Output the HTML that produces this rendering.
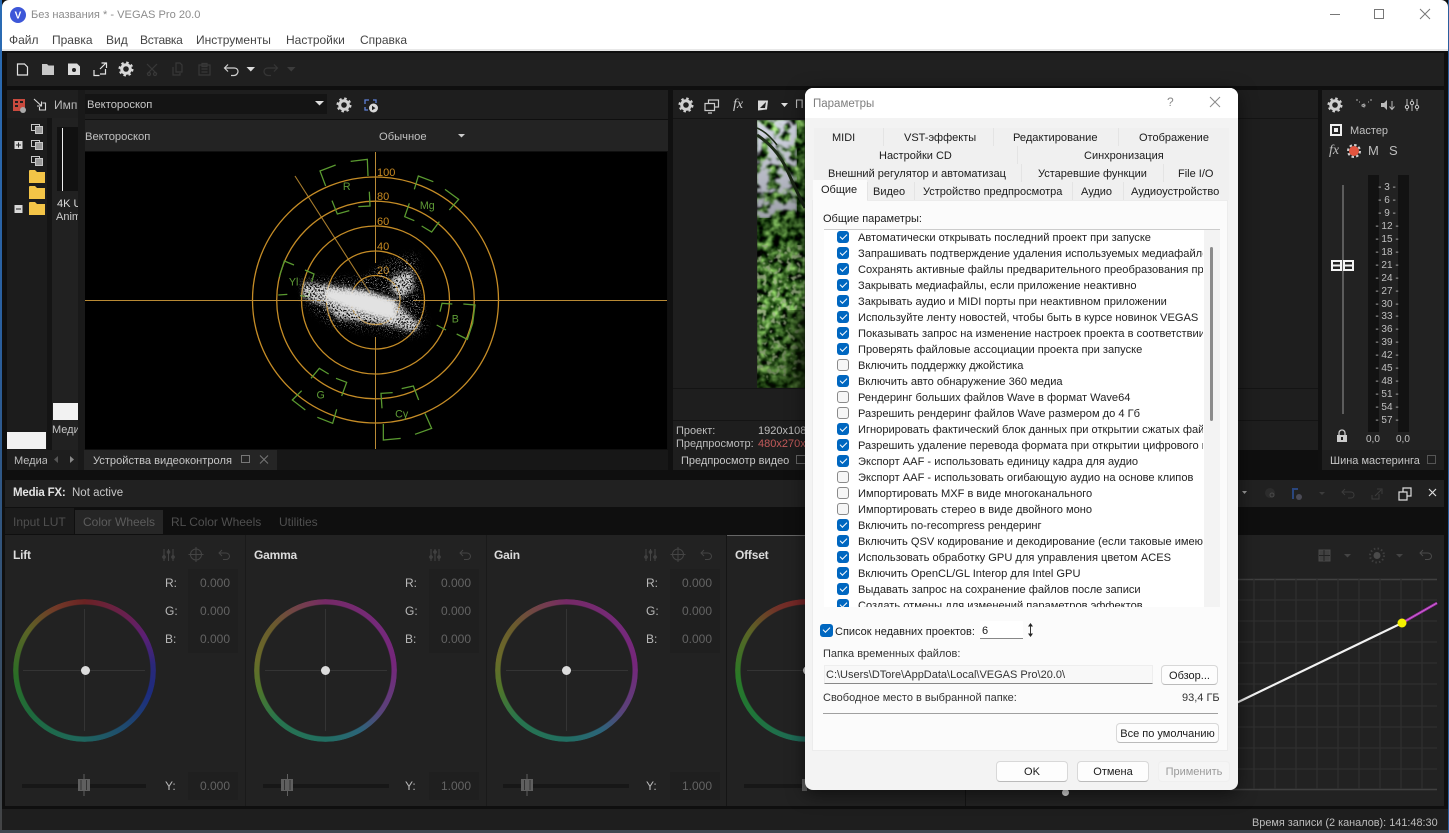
<!DOCTYPE html>
<html lang="ru"><head><meta charset="utf-8"><title>Без названия * - VEGAS Pro 20.0</title>
<style>
html,body{margin:0;padding:0;background:#2a6cb5}
#r{position:relative;width:1449px;height:833px;overflow:hidden;background:#2a6cb5;font-family:"Liberation Sans",sans-serif;font-size:11px}
#r div,#r span.a{position:absolute}
.t{position:absolute;white-space:nowrap;line-height:14px;height:14px;margin-top:1px}
.t[style*="font-size:12px"],.h,.lb{margin-top:0}
svg{position:absolute;overflow:visible}
.d{color:#1b1b1b}
.it{left:858px;width:345px;overflow:hidden;color:#222;font-size:11.1px}
.c{position:absolute;left:837px;width:12px;height:12px;border-radius:3px;background:#0067c0}
.c:after{content:"";position:absolute;left:2.5px;top:2.5px;width:6px;height:3px;border-left:1.2px solid #fff;border-bottom:1.2px solid #fff;transform:rotate(-45deg)}
.u{position:absolute;left:837px;width:10px;height:10px;border-radius:3px;background:#f6f6f6;border:1px solid #8a8a8a}
.btn{background:#fdfdfd;border:1px solid #d8d8d8;border-bottom-color:#bbb;border-radius:4px;color:#1b1b1b;text-align:center;box-sizing:border-box;font-size:11px;line-height:20px}
.w{border-radius:50%;width:143px;height:143px;opacity:.8;-webkit-mask:radial-gradient(closest-side,transparent 65.5px,#000 66.5px,#000 71px,transparent 72px);mask:radial-gradient(closest-side,transparent 65.5px,#000 66.5px,#000 71px,transparent 72px)}
.v{background:#1f1f1f;color:#636363;text-align:right;font-size:12px;line-height:28px;width:50px;height:28px;box-sizing:border-box;padding-right:8px}
.lb{color:#b8b8b8;font-size:12px}
.h{color:#dcdcdc;font-weight:bold;font-size:12px;letter-spacing:-.2px}
.s{color:#c0c0c0;font-size:10px;width:40px;text-align:center;left:1367px}
</style></head><body><div id="r">

<!-- edges -->
<div style="left:0;top:0;width:2px;height:833px;background:linear-gradient(#2a6cb5,#2a5f9e 40%,#35506e 75%,#444 100%)"></div>
<div style="left:0;top:830px;width:1449px;height:3px;background:#3d4650"></div>
<div style="left:1448px;top:0;width:1px;height:833px;background:#2a5f9e"></div>

<!-- app base -->
<div style="left:2px;top:0;width:1446px;height:830px;background:#0f0f0f"></div>
<div style="left:2px;top:0;width:1446px;height:50px;background:#fff;border-radius:7px 7px 0 0"></div>
<div style="left:2px;top:49px;width:1446px;height:2px;background:#e8e8e8"></div>
<svg style="left:10px;top:7px" width="16" height="16"><circle cx="8" cy="8" r="8" fill="#3d57d8"/><text x="8" y="11.5" font-size="10" font-weight="bold" fill="#fff" text-anchor="middle" font-family="Liberation Sans">V</text></svg>
<span class="t" style="left:31px;top:8px;font-size:11.1px;color:#8c8c8c;margin-top:0">Без названия * - VEGAS Pro 20.0</span>
<span class="t" style="left:9px;top:33px;font-size:12px;color:#444">Файл</span>
<span class="t" style="left:52px;top:33px;font-size:12px;color:#444">Правка</span>
<span class="t" style="left:106px;top:33px;font-size:12px;color:#444">Вид</span>
<span class="t" style="left:140px;top:33px;font-size:12px;color:#444;letter-spacing:-.3px">Вставка</span>
<span class="t" style="left:196px;top:33px;font-size:12px;color:#444">Инструменты</span>
<span class="t" style="left:286px;top:33px;font-size:12px;color:#444">Настройки</span>
<span class="t" style="left:360px;top:33px;font-size:12px;color:#444">Справка</span>
<svg style="left:1330px;top:5px" width="110" height="20" fill="none" stroke="#777" stroke-width="1"><path d="M0 9.500h10"/><rect x="44.500" y="4.500" width="9" height="9"/><path d="M90 4l10 10M100 4l-10 10"/></svg>

<!-- main toolbar -->
<div style="left:7px;top:53px;width:1437px;height:33px;background:#202020"></div>
<svg style="left:0;top:0" width="400" height="90" fill="none" stroke="#e4e4e4" stroke-width="1.200">
<path d="M17.500 64h7l3 3v8h-10z"/>
<path d="M42 64h5l1.500 1.500h5.500v9.500h-12z" fill="#c8c8c8" stroke="none"/>
<path d="M68 63.500h9l3 3v8.500h-12z" fill="#dcdcdc" stroke="none"/><circle cx="74" cy="70" r="2" fill="#202020" stroke="none"/>
<path d="M94 70v5.500h5.500M100 74h5.500v-5M100 69l6-6M101.500 63h5v5"/>
<circle cx="126" cy="69" r="4.300" stroke="#d8d8d8" stroke-width="3"/><circle cx="126" cy="69" r="6.500" stroke="#d8d8d8" stroke-width="2" stroke-dasharray="2.500 2.600"/>
<path d="M147 64l10 10M157 64l-10 10" stroke="#383838"/><circle cx="149" cy="74" r="1.500" stroke="#383838"/><circle cx="155" cy="74" r="1.500" stroke="#383838"/>
<path d="M173 67v8h7v-2M176 63h4l2 2v7h-6z" stroke="#383838"/>
<path d="M199 65h11v10h-11zM202 63.500h5v3h-5zM201.500 69h6M201.500 72h6" stroke="#383838"/>
<path d="M225 68h9c3 0 4 2 4 3.500s-1.500 4-4 4h-3M228 64.500l-3.500 3.500 3.500 3.500" stroke="#d0d0d0"/>
<path d="M246.500 67h8.500l-4.200 4.500z" fill="#ddd" stroke="none"/>
<path d="M277 68h-9c-3 0-4 2-4 3.500s1.500 4 4 4h3M274 64.500l3.500 3.500-3.500 3.500" stroke="#363636"/>
<path d="M287 67h8.500l-4.200 4.500z" fill="#3c3c3c" stroke="none"/>
</svg>

<!-- LEFT media panel -->
<div style="left:7px;top:90px;width:71px;height:360px;background:#1f1f1f"></div>
<div style="left:7px;top:118px;width:40px;height:332px;background:#1c1c1c"></div>
<div style="left:47px;top:118px;width:5px;height:332px;background:#141414"></div>
<div style="left:52px;top:118px;width:27px;height:332px;background:#212121"></div>
<div style="left:78px;top:90px;width:7px;height:380px;background:#191919"></div>
<svg style="left:0;top:90px" width="85" height="140" fill="none">
<path d="M13 9h12v12h-12z" fill="#c84a3e"/><path d="M15 11h3v2h-3zM20 11h3v2h-3zM15 15h3v2h-3z" fill="#1f1f1f"/><circle cx="23" cy="20" r="3" fill="#aaa"/>
<path d="M34 9l7.500 7M41.500 11.500v4.500h-4.500M39.500 17v3h6v-7h-3" stroke="#d8d8d8" stroke-width="1.100"/>
</svg>
<span class="t" style="left:54px;top:98px;font-size:12px;color:#bbb;width:24px;overflow:hidden">Имп</span>
<svg style="left:0;top:120px" width="50" height="100">
<g fill="none" stroke="#c8c8c8" stroke-width="1"><rect x="31.500" y="4.500" width="8" height="6"/><rect x="35.500" y="6.500" width="7" height="7" fill="#999"/></g>
<g fill="none" stroke="#c8c8c8" stroke-width="1"><rect x="31.500" y="20.500" width="8" height="6"/><rect x="35.500" y="22.500" width="7" height="7" fill="#999"/></g>
<g fill="none" stroke="#c8c8c8" stroke-width="1"><rect x="31.500" y="36.500" width="8" height="6"/><rect x="35.500" y="38.500" width="7" height="7" fill="#999"/></g>
<rect x="14.500" y="21" width="8" height="8" fill="#d8d8d8"/><path d="M16 25h5M18.500 22.500v5" stroke="#222"/>
<rect x="14.500" y="85" width="8" height="8" fill="#d8d8d8"/><path d="M16 89h5" stroke="#222"/>
<path d="M29 51a1 1 0 0 1 1-1h5l2 2h8v11h-16z" fill="#f3c447"/>
<path d="M29 67a1 1 0 0 1 1-1h5l2 2h8v11h-16z" fill="#f3c447"/>
<path d="M29 83a1 1 0 0 1 1-1h5l2 2h8v11h-16z" fill="#f3c447"/>
</svg>
<div style="left:57px;top:127px;width:21px;height:64px;background:#111"></div>
<div style="left:62px;top:128px;width:1px;height:63px;background:#eee"></div>
<span class="t" style="left:57px;top:196px;color:#ddd;font-size:11px;width:21px;overflow:hidden">4K U</span>
<span class="t" style="left:56px;top:209px;color:#ccc;font-size:11px;width:22px;overflow:hidden">Anim</span>
<div style="left:53px;top:403px;width:25px;height:17px;background:#f2f2f2"></div>
<span class="t" style="left:52px;top:422px;color:#c4c4c4;font-size:11px;width:26px;overflow:hidden">Меди</span>
<div style="left:7px;top:432px;width:39px;height:17px;background:#f2f2f2"></div>
<div style="left:7px;top:450px;width:71px;height:20px;background:#1e1e1e"></div>
<span class="t" style="left:14px;top:453px;color:#bdbdbd;font-size:11px;width:33px;overflow:hidden">Медиа</span>
<svg style="left:52px;top:454px" width="24" height="12" fill="#555"><path d="M6 2v7l-4-3.500z"/><path d="M18 2v7l4-3.500z" fill="#888"/></svg>

<!-- scope panel -->
<div style="left:85px;top:90px;width:583px;height:29px;background:#1e1e1e"></div>
<div style="left:85px;top:94px;width:242px;height:20px;background:#141414"></div>
<span class="t" style="left:87px;top:97px;color:#c8c8c8;font-size:11.2px">Вектороскоп</span>
<svg style="left:314px;top:100px" width="12" height="8"><path d="M1 1h9l-4.500 4.500z" fill="#ddd"/></svg>
<svg style="left:336px;top:96px" width="60" height="18" fill="none"><circle cx="8" cy="9" r="4.300" stroke="#d0d0d0" stroke-width="3"/><circle cx="8" cy="9" r="6.500" stroke="#d0d0d0" stroke-width="2" stroke-dasharray="2.500 2.600"/>
<path d="M29 8v-4h4M37 4h3v3M29 11v3h3" stroke="#5e80d8" stroke-width="1.300"/><circle cx="37.500" cy="12" r="4.500" fill="#d8d8d8"/><path d="M36 9.800v4.500l3.500-2.200z" fill="#222"/></svg>
<div style="left:85px;top:120px;width:583px;height:31px;background:#232323"></div>
<span class="t" style="left:85px;top:129px;color:#c0c0c0;font-size:11.2px">Вектороскоп</span>
<span class="t" style="left:379px;top:129px;color:#c0c0c0;font-size:11.2px">Обычное</span>
<svg style="left:457px;top:133px" width="9" height="6"><path d="M1 1h7l-3.500 3.500z" fill="#ccc"/></svg>
<div style="left:85px;top:152px;width:582px;height:297px;background:#000"></div>
<svg style="left:0;top:0" width="800" height="470" fill="none">
<defs>
<filter id="sp" x="-15%" y="-30%" width="130%" height="160%" color-interpolation-filters="sRGB"><feTurbulence type="fractalNoise" baseFrequency=".2" numOctaves="2" seed="7" result="n"/><feColorMatrix in="n" type="matrix" values="0 0 0 0 .82  0 0 0 0 .82  0 0 0 0 .82  9 0 0 0 -3.500" result="m"/><feGaussianBlur in="SourceGraphic" stdDeviation="6" result="bl"/><feComposite in="m" in2="bl" operator="in"/></filter>
<filter id="sq" x="-15%" y="-30%" width="130%" height="160%" color-interpolation-filters="sRGB"><feTurbulence type="fractalNoise" baseFrequency=".28" numOctaves="2" seed="21" result="n"/><feColorMatrix in="n" type="matrix" values="0 0 0 0 .72  0 0 0 0 .72  0 0 0 0 .72  14 0 0 0 -8.500" result="m"/><feGaussianBlur in="SourceGraphic" stdDeviation="10" result="bl"/><feComposite in="m" in2="bl" operator="in"/></filter>
<filter id="sb" x="-20%" y="-40%" width="140%" height="180%"><feGaussianBlur stdDeviation="7"/></filter>
</defs>
<path d="M85 300.500h315M413 300.500h254" stroke="#b98a35"/>
<path d="M375.500 152v111M375.500 337v112" stroke="#b98a35"/>
<path d="M295 176l75 117" stroke="#a87c2c" stroke-width="1.100"/>
<g stroke="#c58c26" stroke-width="1.300">
<circle cx="375.500" cy="300" r="24.500"/><circle cx="375.500" cy="300" r="49"/><circle cx="375.500" cy="300" r="74"/><circle cx="375.500" cy="300" r="98.800"/><circle cx="375.500" cy="300" r="123"/></g>
<g font-family="Liberation Sans" font-size="11" fill="#c98a20"><text x="377" y="176">100</text><text x="377" y="200">80</text><text x="377" y="225">60</text><text x="377" y="250">40</text><text x="377" y="274">20</text></g>
<g transform="translate(230,150) scale(.33333)">
<g stroke="#5a9a30" stroke-width="3.800">
<path d="M317 45l-47 18 17 45M362 34l50-6 2 50M306 152l16 40 36-10M385 170l35-2-2-43"/>
<path d="M610 95l-45-17-12 40M645 118l41 30-28 32M553 212l-29-12 14-40M628 215l-23 31-30-18"/>
<path d="M192 345l-29-12-15 47M145 435l27-2M225 360l27 12-7 23M240 420l-5 20-25-3"/>
<path d="M667 462l-31-2-6 25M620 525l28 15M700 462l35 3-7 55-16 48-32-16"/>
<path d="M243 685l25-30 28 17M318 685l32 12-15 41M215 722l-28 28 39 30M262 802l46 18 12-42"/>
<path d="M488 728l-35 2 3 45M515 716l35-8 16 42M460 822v48l52-5M555 853l50-18-20-45"/>
</g>
<g font-family="Liberation Sans" font-size="32" fill="#5f9c36" text-anchor="middle"><text x="350" y="120">R</text><text x="592" y="177">Mg</text><text x="191" y="406">Yl</text><text x="676" y="518">B</text><text x="272" y="746">G</text><text x="515" y="803">Cy</text></g>
<path d="M210 385L400 385 480 330 560 310 570 430 590 540 540 560 300 525 225 460z" fill="#fff" filter="url(#sq)"/>
<path d="M219 399L300 405 400 420 495 450 570 525 552 545 470 525 320 505 290 470 219 442z" fill="#fff" filter="url(#sp)"/>
<path d="M488 378L545 360 552 420 505 445 482 412z" fill="#fff" filter="url(#sp)"/>
<path d="M285 416L405 426 495 452 502 512 435 500 345 472 285 448z" fill="#e2e2e2" filter="url(#sb)"/>
</g>
</svg>
<div style="left:85px;top:450px;width:583px;height:20px;background:#171717"></div>
<div style="left:84px;top:450px;width:193px;height:20px;background:#252525"></div>
<span class="t" style="left:93px;top:453px;color:#c6c6c6;font-size:11.1px">Устройства видеоконтроля</span>
<svg style="left:240px;top:454px" width="32" height="12" fill="none" stroke="#777"><rect x="1.500" y="1.500" width="8" height="7"/><path d="M20 1.500l8 8M28 1.500l-8 8"/></svg>

<!-- preview panel -->
<div style="left:668px;top:89px;width:5px;height:381px;background:#101010"></div>
<div style="left:673px;top:90px;width:645px;height:360px;background:#1e1e1e"></div>
<div style="left:673px;top:118px;width:645px;height:1px;background:#141414"></div>
<div style="left:673px;top:388px;width:645px;height:1px;background:#141414"></div>
<div style="left:673px;top:420px;width:645px;height:1px;background:#141414"></div>
<svg style="left:676px;top:95px" width="130" height="20" fill="none"><circle cx="10" cy="10" r="4.300" stroke="#d0d0d0" stroke-width="3"/><circle cx="10" cy="10" r="6.500" stroke="#d0d0d0" stroke-width="2" stroke-dasharray="2.500 2.600"/>
<path d="M29 8.500h9.500v7h-9.500zM32.500 8v-3h10v7h-3.500M32 18h4" stroke="#ccc" stroke-width="1.200"/>
<path d="M82 5.500h10l-1 9-9 1z" fill="#d8d8d8" stroke="none"/><path d="M84 13l6-6-1 6z" fill="#1e1e1e" stroke="none"/>
<path d="M105 8h7l-3.500 4z" fill="#ddd" stroke="none"/></svg>
<span class="t" style="left:733px;top:97px;font-size:14px;font-style:italic;font-family:'Liberation Serif',serif;color:#ccc">fx</span>
<span class="t" style="left:795px;top:97px;color:#bbb;font-size:12px">П</span>
<svg style="left:757px;top:120px" width="48" height="268"><defs>
<filter id="lf" x="0" y="0" width="100%" height="100%" color-interpolation-filters="sRGB"><feTurbulence type="fractalNoise" baseFrequency=".13" numOctaves="3" seed="12"/><feColorMatrix type="matrix" values="1.700 0 0 0 -.62  2.100 0 0 0 -.62  1.300 0 0 0 -.5  0 0 0 0 1"/><feGaussianBlur stdDeviation=".7"/></filter>
<filter id="lg" x="0" y="0" width="100%" height="100%" color-interpolation-filters="sRGB"><feTurbulence type="fractalNoise" baseFrequency=".2" numOctaves="2" seed="30"/><feColorMatrix type="matrix" values="0 0 0 0 .72  0 0 0 0 .8  0 0 0 0 .62  9 0 0 0 -5"/><feGaussianBlur stdDeviation=".6"/></filter>
<filter id="sk" x="0" y="0" width="100%" height="100%" color-interpolation-filters="sRGB"><feTurbulence type="fractalNoise" baseFrequency=".09 .11" numOctaves="3" seed="3"/><feColorMatrix type="matrix" values="0 0 0 0 .88  0 0 0 0 .89  0 0 0 0 .95  9 0 0 0 -3.900"/><feGaussianBlur stdDeviation="1"/></filter>
<linearGradient id="fd" x1="0" y1="0" x2="0" y2="1"><stop offset="0" stop-color="#000" stop-opacity=".05"/><stop offset=".35" stop-color="#000" stop-opacity=".28"/><stop offset=".7" stop-color="#000" stop-opacity=".05"/><stop offset="1" stop-color="#0a1402" stop-opacity=".4"/></linearGradient>
<linearGradient id="ff" x1="0" y1="0" x2="1" y2="0"><stop offset=".45" stop-color="#0a1402" stop-opacity="0"/><stop offset="1" stop-color="#0a1402" stop-opacity=".6"/></linearGradient></defs>
<rect width="48" height="268" filter="url(#lf)"/>
<rect width="40" height="98" filter="url(#sk)"/>
<rect y="125" width="48" height="135" filter="url(#lg)" opacity=".8"/>
<path d="M0 15Q20 28 30 50T48 88" stroke="#20301a" stroke-width="3" fill="none"/>
<path d="M0 8Q10 12 20 25" stroke="#20301a" stroke-width="1.500" fill="none"/>
<rect width="48" height="268" fill="url(#fd)"/>
<rect y="190" width="48" height="78" fill="url(#ff)"/></svg>
<span class="t" style="left:676px;top:423px;color:#bdbdbd">Проект:</span>
<span class="t" style="left:758px;top:423px;color:#bdbdbd;width:47px;overflow:hidden">1920x108</span>
<span class="t" style="left:676px;top:436px;color:#bdbdbd">Предпросмотр:</span>
<span class="t" style="left:758px;top:436px;color:#c25a5a;width:47px;overflow:hidden">480x270x</span>
<div style="left:673px;top:450px;width:132px;height:20px;background:#1e1e1e"></div>
<span class="t" style="left:681px;top:453px;color:#c6c6c6">Предпросмотр видео</span>
<svg style="left:796px;top:455px" width="9" height="10" fill="none" stroke="#666"><rect x=".5" y=".5" width="9" height="8"/></svg>

<!-- master -->
<div style="left:1318px;top:89px;width:4px;height:381px;background:#101010"></div>
<div style="left:1322px;top:90px;width:122px;height:360px;background:#222"></div>
<div style="left:1322px;top:450px;width:122px;height:20px;background:#1e1e1e"></div>
<svg style="left:1326px;top:96px" width="100" height="20" fill="none"><circle cx="9" cy="9" r="4.300" stroke="#cfcfcf" stroke-width="3"/><circle cx="9" cy="9" r="6.500" stroke="#cfcfcf" stroke-width="2" stroke-dasharray="2.500 2.600"/>
<path d="M33 6h1M42 6h1M30 4h2M44 4h2M36 9l2-1v3l-2-1zM39 8.500v2" stroke="#aaa"/>
<path d="M55 7h3l3-3v10l-3-3h-3z" fill="#bbb"/><path d="M66 5v8M63.500 10.500l2.500 3 2.500-3" stroke="#bbb"/>
<path d="M81 3v12M86 3v12M91 3v12" stroke="#bbb"/><circle cx="81" cy="11" r="1.700" fill="#222" stroke="#ccc"/><circle cx="86" cy="7" r="1.700" fill="#222" stroke="#ccc"/><circle cx="91" cy="11" r="1.700" fill="#222" stroke="#ccc"/></svg>
<svg style="left:1330px;top:124px" width="12" height="12"><rect x="0" y="0" width="12" height="12" fill="#eee"/><rect x="2" y="2" width="8" height="8" fill="#222"/><rect x="4" y="4" width="4" height="4" fill="#eee"/></svg>
<span class="t" style="left:1350px;top:123px;color:#c0c0c0">Мастер</span>
<span class="t" style="left:1329px;top:143px;font-size:14px;font-style:italic;font-family:'Liberation Serif',serif;color:#bdbdbd">fx</span>
<svg style="left:1346px;top:143px" width="16" height="16" fill="none"><circle cx="8" cy="8" r="5" fill="#e2553f"/><circle cx="8" cy="8" r="6" stroke="#cfcfcf" stroke-width="2" stroke-dasharray="2.500 2.200"/></svg>
<span class="t" style="left:1368px;top:143px;color:#bdbdbd;font-size:13px">M</span>
<span class="t" style="left:1389px;top:143px;color:#bdbdbd;font-size:13px">S</span>
<div style="left:1342px;top:185px;width:2px;height:229px;background:#5c5c5c"></div>
<svg style="left:1331px;top:260px" width="24" height="11"><rect width="11" height="11" fill="#f4f4f4"/><rect x="12" width="11" height="11" fill="#f4f4f4"/><path d="M2 2h7v2.500h-7zM2 6.500h7v2.500h-7zM14 2h7v2.500h-7zM14 6.500h7v2.500h-7z" fill="#222"/></svg>
<div style="left:1368px;top:175px;width:11px;height:257px;background:#121212"></div>
<div style="left:1398px;top:175px;width:11px;height:257px;background:#121212"></div>
<span class="t s" style="top:180px">- 3 -</span><span class="t s" style="top:193px">- 6 -</span><span class="t s" style="top:206px">- 9 -</span><span class="t s" style="top:219px">- 12 -</span><span class="t s" style="top:232px">- 15 -</span><span class="t s" style="top:245px">- 18 -</span><span class="t s" style="top:258px">- 21 -</span><span class="t s" style="top:271px">- 24 -</span><span class="t s" style="top:284px">- 27 -</span><span class="t s" style="top:297px">- 30 -</span><span class="t s" style="top:309px">- 33 -</span><span class="t s" style="top:322px">- 36 -</span><span class="t s" style="top:335px">- 39 -</span><span class="t s" style="top:348px">- 42 -</span><span class="t s" style="top:361px">- 45 -</span><span class="t s" style="top:374px">- 48 -</span><span class="t s" style="top:387px">- 51 -</span><span class="t s" style="top:400px">- 54 -</span><span class="t s" style="top:413px">- 57 -</span>
<svg style="left:1336px;top:429px" width="12" height="14" fill="none"><path d="M3 6V4a3 3 0 0 1 6 0v2" stroke="#ccc" stroke-width="1.300"/><rect x="1" y="6" width="10" height="7" fill="#ccc"/><rect x="5" y="8" width="2" height="3" fill="#222"/></svg>
<span class="t" style="left:1366px;top:432px;color:#c0c0c0;font-size:10px">0,0</span>
<span class="t" style="left:1396px;top:432px;color:#c0c0c0;font-size:10px">0,0</span>
<span class="t" style="left:1330px;top:453px;color:#c6c6c6">Шина мастеринга</span>
<svg style="left:1427px;top:455px" width="10" height="10" fill="none" stroke="#555"><rect x=".5" y=".5" width="8" height="8"/></svg>

<!-- Media FX -->
<div style="left:5px;top:480px;width:1439px;height:27px;background:#212121"></div>
<span class="t" style="left:13px;top:486px;color:#e2e2e2;font-weight:bold;font-size:11.5px;letter-spacing:-.2px;margin-top:0">Media FX:</span>
<span class="t" style="left:72px;top:486px;color:#c8c8c8;font-size:11.5px;margin-top:0">Not active</span>
<svg style="left:1238px;top:484px" width="205" height="20" fill="none">
<path d="M4 7h5l-2.500 3z" fill="#999"/>
<circle cx="32" cy="9" r="5" fill="#2c2c2c"/><circle cx="34" cy="11" r="2" stroke="#4a4a4a"/>
<path d="M54 5h6M55 5v10" stroke="#2a467e" stroke-width="2"/><circle cx="61" cy="13" r="3" fill="#4a4a55"/>
<path d="M81 8h6l-3 3z" fill="#3c3c3c"/>
<path d="M104 8h9c2 0 3 1.500 3 3s-1 3-3 3h-3M107 5l-3 3 3 3" stroke="#3c3c3c"/>
<path d="M134 11v4h5M139 5h5v5M137 12l6-6M141 10v5h-2" stroke="#3c3c3c"/>
<path d="M161 8h8v8h-8zM165 8v-4h8v8h-4" stroke="#ddd" stroke-width="1.200"/>
<path d="M191 5l7 7M198 5l-7 7" stroke="#ddd" stroke-width="1.200"/></svg>
<div style="left:5px;top:507px;width:1439px;height:28px;background:#0f0f0f"></div>
<div style="left:5px;top:508px;width:69px;height:26px;background:#1b1b1b"></div>
<div style="left:75px;top:510px;width:88px;height:24px;background:#262626"></div>
<span class="t" style="left:13px;top:515px;font-size:12px;color:#4f4f4f">Input LUT</span>
<span class="t" style="left:83px;top:515px;font-size:12px;color:#5c5c5c">Color Wheels</span>
<span class="t" style="left:171px;top:515px;font-size:12px;color:#4f4f4f">RL Color Wheels</span>
<span class="t" style="left:279px;top:515px;font-size:12px;color:#4f4f4f">Utilities</span>
<div style="left:5px;top:535px;width:1439px;height:271px;background:#222"></div>
<div style="left:245px;top:535px;width:1px;height:271px;background:#1a1a1a"></div>
<div style="left:486px;top:535px;width:1px;height:271px;background:#1a1a1a"></div>
<div style="left:726px;top:535px;width:1px;height:271px;background:#151515"></div>
<div style="left:727px;top:535px;width:80px;height:1px;background:#666"></div>
<div style="left:5px;top:806px;width:1439px;height:3px;background:#0f0f0f"></div>
<div style="left:965px;top:790px;width:1px;height:16px;background:#141414"></div>
<div style="left:1062px;top:789px;width:7px;height:7px;border-radius:50%;background:#ddd"></div>

<!-- Wheels -->
<span class="t h" style="left:13px;top:548px">Lift</span>
<span class="t h" style="left:254px;top:548px">Gamma</span>
<span class="t h" style="left:494px;top:548px">Gain</span>
<span class="t h" style="left:735px;top:548px">Offset</span>
<svg style="left:0;top:0;" width="810" height="810" fill="none" stroke="#444">
<g><path d="M164 549v12M168.500 549v12M173 549v12"/><circle cx="164" cy="557" r="1.300"/><circle cx="168.500" cy="552" r="1.300"/><circle cx="173" cy="557" r="1.300"/><circle cx="196" cy="554.500" r="5.500"/><path d="M188.500 554.500h15M196 547v15"/><path d="M219 553h7c2.500 0 3.500 2 3.500 3.300s-1 3.200-3.500 3.200h-3M222 550l-3 3 3 3"/></g>
<g transform="translate(241,0)"><path d="M190 549v12M194 549v12M198 549v12"/><circle cx="190" cy="557" r="1.300"/><circle cx="194" cy="552" r="1.300"/><circle cx="198" cy="557" r="1.300"/><path d="M219 553h7c2.500 0 3.500 2 3.500 3.300s-1 3.200-3.500 3.200h-3M222 550l-3 3 3 3"/></g>
<g transform="translate(482,0)"><path d="M164 549v12M168.500 549v12M173 549v12"/><circle cx="164" cy="557" r="1.300"/><circle cx="168.500" cy="552" r="1.300"/><circle cx="173" cy="557" r="1.300"/><circle cx="196" cy="554.500" r="5.500"/><path d="M188.500 554.500h15M196 547v15"/><path d="M219 553h7c2.500 0 3.500 2 3.500 3.300s-1 3.200-3.500 3.200h-3M222 550l-3 3 3 3"/></g>
<g stroke="#343434"><path d="M23 670.500h122M84.500 609v122M265 670.500h122M325.500 609v122M506 670.500h122M566.500 609v122M747 670.500h60"/></g>
</svg>
<div class="w" style="left:13px;top:599px;background:conic-gradient(#7d2424,#7a2060 40deg,#6b1f8a 60deg,#2d2a90 85deg,#1c2f96 110deg,#1f5a80 150deg,#1f7a6a 185deg,#1e7d45 230deg,#2c8228 265deg,#6b7428 305deg,#86402a 335deg,#7d2424)"></div>
<div class="w" style="left:254px;top:599px;background:conic-gradient(#8a2c78,#8a2c90 50deg,#8a2890 85deg,#6a4a90 125deg,#2f7590 150deg,#228272 180deg,#2a8a58 225deg,#5c8a2c 255deg,#7d7d2c 280deg,#7d6a30 310deg,#8a4060 345deg,#8a2c78)"></div>
<div class="w" style="left:495px;top:599px;background:conic-gradient(#8a2c78,#8a2c90 50deg,#8a2890 85deg,#6a4a90 125deg,#2f7590 150deg,#228272 180deg,#2a8a58 225deg,#5c8a2c 255deg,#7d7d2c 280deg,#7d6a30 310deg,#8a4060 345deg,#8a2c78)"></div>
<div class="w" style="left:735px;top:599px;background:conic-gradient(#8c2428,#7a2060 40deg,#6b1f8a 60deg,#2d2a90 85deg,#1c2f96 110deg,#1f5a80 150deg,#1f7d68 185deg,#1f8a40 230deg,#2c9028 265deg,#6b7428 305deg,#86352a 335deg,#8c2428)"></div>
<div style="left:81px;top:666px;width:9px;height:9px;border-radius:50%;background:#dcdcdc"></div>
<div style="left:321px;top:666px;width:9px;height:9px;border-radius:50%;background:#dcdcdc"></div>
<div style="left:562px;top:666px;width:9px;height:9px;border-radius:50%;background:#dcdcdc"></div>
<div style="left:803px;top:666px;width:9px;height:9px;border-radius:50%;background:#dcdcdc"></div>

<span class="t lb" style="left:165px;top:576px">R:</span><div class="v" style="left:188px;top:569px">0.000</div>
<span class="t lb" style="left:165px;top:604px">G:</span><div class="v" style="left:188px;top:597px">0.000</div>
<span class="t lb" style="left:165px;top:632px">B:</span><div class="v" style="left:188px;top:625px">0.000</div>
<span class="t lb" style="left:165px;top:779px">Y:</span><div class="v" style="left:188px;top:772px">0.000</div>
<span class="t lb" style="left:405px;top:576px">R:</span><div class="v" style="left:429px;top:569px">0.000</div>
<span class="t lb" style="left:405px;top:604px">G:</span><div class="v" style="left:429px;top:597px">0.000</div>
<span class="t lb" style="left:405px;top:632px">B:</span><div class="v" style="left:429px;top:625px">0.000</div>
<span class="t lb" style="left:405px;top:779px">Y:</span><div class="v" style="left:429px;top:772px">1.000</div>
<span class="t lb" style="left:646px;top:576px">R:</span><div class="v" style="left:670px;top:569px">0.000</div>
<span class="t lb" style="left:646px;top:604px">G:</span><div class="v" style="left:670px;top:597px">0.000</div>
<span class="t lb" style="left:646px;top:632px">B:</span><div class="v" style="left:670px;top:625px">0.000</div>
<span class="t lb" style="left:646px;top:779px">Y:</span><div class="v" style="left:670px;top:772px">1.000</div>

<div style="left:22px;top:784px;width:124px;height:4px;background:#171717"></div>
<div style="left:263px;top:784px;width:126px;height:4px;background:#171717"></div>
<div style="left:503px;top:784px;width:126px;height:4px;background:#171717"></div>
<div style="left:744px;top:784px;width:61px;height:4px;background:#171717"></div>
<svg style="left:0;top:774px" width="810" height="24"><g fill="#5f5f5f"><path d="M78 5h12v12h-12zM83.500 0h1v22h-1zM287 0h1v22h-1zM281 5h12v12h-12zM521 5h12v12h-12zM526.500 0h1v22h-1zM802 5h5v12h-5z"/></g><path d="M81 6v10M86.500 6v10M284.500 6v10M290 6v10M524.500 6v10M530 6v10" stroke="#333"/></svg>

<!-- curve -->
<svg style="left:1230px;top:535px" width="214" height="271" fill="none">
<g stroke="#404040" stroke-width="1.500"><path d="M0 44.500h207M0 254.500h207"/></g>
<g stroke="#2f2f2f" stroke-width="1.300"><path d="M0 65h207M0 86h207M0 107h207M0 128h207M0 149h207M0 171h207M0 192h207M0 213h207M0 234h207M24 44v210M45 44v210M66 44v210M87 44v210M108 44v210M129 44v210M150 44v210M171 44v210M192 44v210"/></g>
<path d="M0 171L172 88" stroke="#f2f2f2" stroke-width="2.200"/>
<path d="M172 88L207 68" stroke="#a62ab0" stroke-width="2.600"/><path d="M172 88L207 68" stroke="#d68ad8" stroke-width=".7"/>
<circle cx="172" cy="88" r="4.500" fill="#f4f000"/>
<rect x="89" y="15" width="11" height="11" stroke="#4a4a4a" fill="#404040"/><path d="M89 20.500h11M94 15v11" stroke="#222"/>
<path d="M114 19h7l-3.500 3.500z" fill="#444"/>
<circle cx="147" cy="20.500" r="3.500" fill="#4a4a4a"/><circle cx="147" cy="20.500" r="7" stroke="#3e3e3e" stroke-dasharray="1.500 2.200" stroke-width="2"/>
<path d="M166 19h7l-3.500 3.500z" fill="#444"/>
<path d="M190 18h8c2.500 0 3.500 2 3.500 3.300s-1 3.200-3.500 3.200h-3M193 15l-3 3 3 3" stroke="#4a4a4a"/>
</svg>

<!-- status -->
<div style="left:2px;top:809px;width:1446px;height:21px;background:#1e1e1e"></div>
<span class="t" style="left:1252px;top:815px;color:#bcbcbc;font-size:10.9px">Время записи (2 каналов): 141:48:30</span>

<!-- DIALOG -->
<div style="left:805px;top:88px;width:433px;height:702px;background:#f3f3f3;border-radius:8px;box-shadow:0 4px 18px rgba(0,0,0,.55);overflow:hidden">
<div style="left:0;top:0;width:433px;height:30px;background:#fff"></div>
<div style="left:7px;top:112px;width:416px;height:551px;background:#fbfbfb;border:1px solid #ececec;box-sizing:border-box"></div>
<div style="left:9px;top:40px;width:415px;height:18px;background:#f0f0f0"></div>
<div style="left:9px;top:58px;width:415px;height:18px;background:#f0f0f0"></div>
<div style="left:9px;top:76px;width:415px;height:18px;background:#f0f0f0"></div>
<div style="left:9px;top:94px;width:415px;height:18px;background:#f0f0f0"></div>
<div style="left:8px;top:92px;width:54px;height:21px;background:#fbfbfb"></div>
<div style="left:78px;top:40px;width:1px;height:18px;background:#e4e4e4"></div>
<div style="left:188px;top:40px;width:1px;height:18px;background:#e4e4e4"></div>
<div style="left:313px;top:40px;width:1px;height:18px;background:#e4e4e4"></div>
<div style="left:212px;top:58px;width:1px;height:18px;background:#e4e4e4"></div>
<div style="left:216px;top:76px;width:1px;height:18px;background:#e4e4e4"></div>
<div style="left:358px;top:76px;width:1px;height:18px;background:#e4e4e4"></div>
<div style="left:62px;top:94px;width:1px;height:18px;background:#e4e4e4"></div>
<div style="left:109px;top:94px;width:1px;height:18px;background:#e4e4e4"></div>
<div style="left:267px;top:94px;width:1px;height:18px;background:#e4e4e4"></div>
<div style="left:318px;top:94px;width:1px;height:18px;background:#e4e4e4"></div>
</div>
<span class="t" style="left:813px;top:96px;color:#7e7e7e;font-size:11.5px">Параметры</span>
<span class="t" style="left:1167px;top:95px;color:#8a8a8a;font-size:12px">?</span>
<svg style="left:1209px;top:96px" width="12" height="12" stroke="#8a8a8a" fill="none"><path d="M1 1l10 10M11 1l-10 10"/></svg>

<span class="t d" style="left:832px;top:130px">MIDI</span>
<span class="t d" style="left:904px;top:130px">VST-эффекты</span>
<span class="t d" style="left:1013px;top:130px;font-size:11.1px">Редактирование</span>
<span class="t d" style="left:1139px;top:130px">Отображение</span>
<span class="t d" style="left:879px;top:148px">Настройки CD</span>
<span class="t d" style="left:1084px;top:148px">Синхронизация</span>
<span class="t d" style="left:828px;top:166px">Внешний регулятор и автоматизац</span>
<span class="t d" style="left:1038px;top:166px">Устаревшие функции</span>
<span class="t d" style="left:1178px;top:166px">File I/O</span>
<span class="t d" style="left:821px;top:182px">Общие</span>
<span class="t d" style="left:873px;top:184px">Видео</span>
<span class="t d" style="left:923px;top:184px">Устройство предпросмотра</span>
<span class="t d" style="left:1081px;top:184px">Аудио</span>
<span class="t d" style="left:1131px;top:184px;font-size:11.1px">Аудиоустройство</span>
<span class="t d" style="left:823px;top:211px">Общие параметры:</span>

<!-- list -->
<div style="left:824px;top:229px;width:396px;height:378px;background:#fff;border-top:1px solid #ccc;box-sizing:border-box;overflow:hidden"></div>
<div style="left:1204px;top:230px;width:16px;height:377px;background:#f3f3f3"></div>
<div style="left:1210px;top:247px;width:3px;height:174px;background:#8c8c8c;border-radius:2px"></div>
<span class="c" style="top:231px"></span><span class="t it" style="top:230px">Автоматически открывать последний проект при запуске</span>
<span class="c" style="top:247px"></span><span class="t it" style="top:246px">Запрашивать подтверждение удаления используемых медиафайлов</span>
<span class="c" style="top:263px"></span><span class="t it" style="top:262px">Сохранять активные файлы предварительного преобразования при</span>
<span class="c" style="top:279px"></span><span class="t it" style="top:278px">Закрывать медиафайлы, если приложение неактивно</span>
<span class="c" style="top:295px"></span><span class="t it" style="top:294px">Закрывать аудио и MIDI порты при неактивном приложении</span>
<span class="c" style="top:311px"></span><span class="t it" style="top:310px">Используйте ленту новостей, чтобы быть в курсе новинок VEGAS</span>
<span class="c" style="top:327px"></span><span class="t it" style="top:326px">Показывать запрос на изменение настроек проекта в соответствии</span>
<span class="c" style="top:343px"></span><span class="t it" style="top:342px">Проверять файловые ассоциации проекта при запуске</span>
<span class="u" style="top:359px"></span><span class="t it" style="top:358px">Включить поддержку джойстика</span>
<span class="c" style="top:375px"></span><span class="t it" style="top:374px">Включить авто обнаружение 360 медиа</span>
<span class="u" style="top:391px"></span><span class="t it" style="top:390px">Рендеринг больших файлов Wave в формат Wave64</span>
<span class="u" style="top:407px"></span><span class="t it" style="top:406px">Разрешить рендеринг файлов Wave размером до 4 Гб</span>
<span class="c" style="top:423px"></span><span class="t it" style="top:422px">Игнорировать фактический блок данных при открытии сжатых файлов</span>
<span class="c" style="top:439px"></span><span class="t it" style="top:438px">Разрешить удаление перевода формата при открытии цифрового видео</span>
<span class="c" style="top:455px"></span><span class="t it" style="top:454px">Экспорт AAF - использовать единицу кадра для аудио</span>
<span class="u" style="top:471px"></span><span class="t it" style="top:470px">Экспорт AAF - использовать огибающую аудио на основе клипов</span>
<span class="u" style="top:487px"></span><span class="t it" style="top:486px">Импортировать MXF в виде многоканального</span>
<span class="u" style="top:503px"></span><span class="t it" style="top:502px">Импортировать стерео в виде двойного моно</span>
<span class="c" style="top:519px"></span><span class="t it" style="top:518px">Включить no-recompress рендеринг</span>
<span class="c" style="top:535px"></span><span class="t it" style="top:534px">Включить QSV кодирование и декодирование (если таковые имеются)</span>
<span class="c" style="top:551px"></span><span class="t it" style="top:550px">Использовать обработку GPU для управления цветом ACES</span>
<span class="c" style="top:567px"></span><span class="t it" style="top:566px">Включить OpenCL/GL Interop для Intel GPU</span>
<span class="c" style="top:583px"></span><span class="t it" style="top:582px">Выдавать запрос на сохранение файлов после записи</span>
<span class="c" style="top:599px;height:8px;border-radius:3px 3px 0 0;overflow:hidden"></span><span class="t it" style="top:598px;height:8px;overflow:hidden">Создать отмены для изменений параметров эффектов</span>

<span class="c" style="left:820px;top:624px;width:13px;height:13px"></span>
<span class="t d" style="left:835px;top:624px">Список недавних проектов:</span>
<div style="left:980px;top:621px;width:43px;height:18px;background:#fff;border-bottom:1px solid #888;box-sizing:border-box"></div>
<span class="t d" style="left:982px;top:623px">6</span>
<svg style="left:1026px;top:620px" width="9" height="20"><path d="M4.500 3l2.500 3.500h-5zM4.500 17l2.500-3.500h-5z" fill="#222"/><path d="M4.500 6v8" stroke="#333"/></svg>
<span class="t" style="left:823px;top:646px;color:#333">Папка временных файлов:</span>
<div style="left:824px;top:665px;width:329px;height:19px;background:#f8f8f8;border:1px solid #eee;border-bottom:1px solid #888;box-sizing:border-box"></div>
<span class="t" style="left:826px;top:667px;color:#333;font-size:11px">C:\Users\DTore\AppData\Local\VEGAS Pro\20.0\</span>
<div class="btn" style="left:1161px;top:665px;width:57px;height:20px">Обзор...</div>
<span class="t" style="left:823px;top:690px;color:#333">Свободное место в выбранной папке:</span>
<span class="t" style="left:1182px;top:690px;color:#333">93,4 ГБ</span>
<div style="left:823px;top:713px;width:395px;height:1px;background:#a0a0a0"></div>
<div class="btn" style="left:1116px;top:723px;width:103px;height:20px">Все по умолчанию</div>
<div class="btn" style="left:996px;top:761px;width:72px;height:21px;line-height:21px">OK</div>
<div class="btn" style="left:1077px;top:761px;width:72px;height:21px;line-height:21px">Отмена</div>
<div class="btn" style="left:1158px;top:761px;width:72px;height:21px;line-height:21px;background:#f5f5f5;border-color:#efefef;color:#9a9a9a">Применить</div>
</div></body></html>
